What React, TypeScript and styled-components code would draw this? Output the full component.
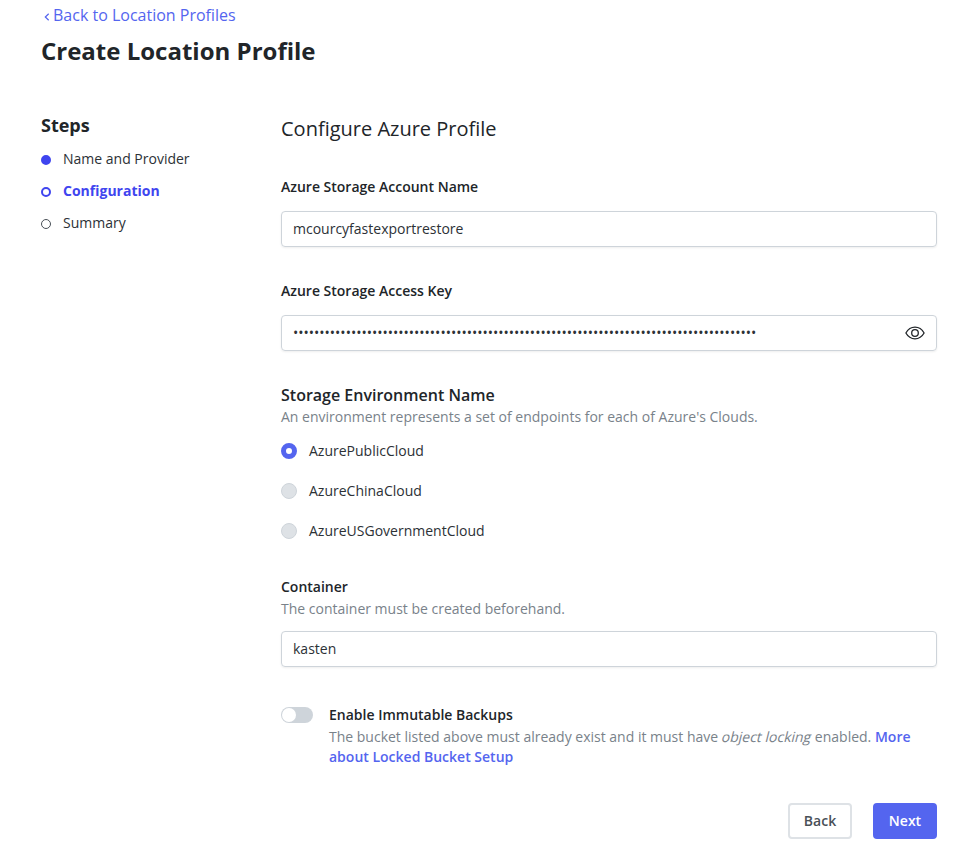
import React, { useState } from "react";
import styled, { createGlobalStyle, css } from "styled-components";

const GlobalStyle = createGlobalStyle`
  *, *::before, *::after { box-sizing: border-box; }
  body {
    margin: 0;
    background: #fff;
    color: #212529;
    font: 400 14px/20px "Open Sans", "Noto Sans", sans-serif;
  }
  h1, h2, h3, p, ol, fieldset { margin: 0; padding: 0; border: 0; }
  ol { list-style: none; }
  input, button { font: inherit; }
`;

const Page = styled.div`
  width: 956px;
  height: 849px;
  padding: 3px 19px 0 41px;
  overflow: hidden;
`;

const BackLink = styled.a`
  display: flex;
  align-items: center;
  gap: 3px;
  width: max-content;
  height: 24px;
  padding-left: 3px;
  color: #5465ef;
  font-size: 16px;
  line-height: 24px;
  text-decoration: none;

  svg { margin-top: 3px; }
`;

const Title = styled.h1`
  margin-top: 8px;
  font-size: 24px;
  line-height: 32px;
  font-weight: 700;
`;

const Columns = styled.div`
  display: grid;
  grid-template-columns: 240px 656px;
  margin-top: 46px;
`;

const StepsTitle = styled.h2`
  font-size: 18px;
  line-height: 24px;
  font-weight: 700;
`;

const StepList = styled.ol`
  display: flex;
  flex-direction: column;
  gap: 12px;
  margin-top: 12px;
`;

type StepState = "done" | "current" | "todo";

const Step = styled.li<{ $state: StepState }>`
  display: flex;
  align-items: center;
  gap: 12px;
  color: #2c3136;
  ${({ $state }) =>
    $state === "current" &&
    css`
      color: #3f45ef;
      font-weight: 700;
    `}
`;

const Marker = styled.span<{ $state: StepState }>`
  width: 10px;
  height: 10px;
  margin-top: 1px;
  border-radius: 50%;
  border: ${({ $state }) => ($state === "todo" ? "1px solid #495057" : "2px solid #3f45ef")};
  background: ${({ $state }) => ($state === "done" ? "#3f45ef" : "#fff")};
`;

const FormTitle = styled.h2`
  padding-top: 2px;
  font-size: 20px;
  line-height: 28px;
  font-weight: 400;
`;

const Field = styled.div<{ $top: number }>`
  margin-top: ${({ $top }) => $top}px;
`;

const Label = styled.label`
  display: block;
  font-weight: 600;
`;

const GroupTitle = styled.h3`
  font-size: 16px;
  line-height: 24px;
  font-weight: 600;
`;

const Hint = styled.p`
  color: #79828a;
`;

const Slanted = styled.em`
  display: inline-block;
  font-style: normal;
  transform: skewX(-14deg);
`;

const InputBox = styled.div<{ $top: number }>`
  display: flex;
  align-items: center;
  height: 36px;
  margin-top: ${({ $top }) => $top}px;
  padding: 0 11px;
  border: 1px solid #ced4da;
  border-radius: 4px;
  box-shadow: 0 1px 2px rgba(33, 37, 41, 0.08);
`;

const Input = styled.input`
  flex: 1;
  min-width: 0;
  height: 20px;
  padding: 0;
  border: 0;
  outline: 0;
  background: none;
  color: #2c3136;
`;

const IconButton = styled.button`
  display: flex;
  padding: 0;
  border: 0;
  background: none;
  color: #212529;
`;

const RadioList = styled.div`
  display: flex;
  flex-direction: column;
  gap: 20px;
  margin-top: 14px;
`;

const RadioRow = styled.label`
  display: flex;
  align-items: center;
  gap: 12px;
  color: #2c3136;
`;

const Radio = styled.input`
  appearance: none;
  width: 16px;
  height: 16px;
  margin: 0;
  border: 1px solid #ced4da;
  border-radius: 50%;
  background: #dee2e6;

  &:checked {
    border: 5px solid #5465ef;
    background: #fff;
  }
`;

const ToggleField = styled.div`
  display: grid;
  grid-template-columns: 32px 1fr;
  column-gap: 16px;
  margin-top: 38px;
`;

const Toggle = styled.button<{ $on: boolean }>`
  display: flex;
  justify-content: ${({ $on }) => ($on ? "flex-end" : "flex-start")};
  width: 32px;
  height: 16px;
  margin-top: 2px;
  padding: 1px;
  border: 0;
  border-radius: 8px;
  background: ${({ $on }) => ($on ? "#5465ef" : "#ced4da")};
`;

const Knob = styled.span`
  width: 14px;
  height: 14px;
  border-radius: 50%;
  background: #fff;
`;

const TextLink = styled.a`
  color: #5465ef;
  font-weight: 600;
  text-decoration: none;
`;

const Actions = styled.div`
  display: flex;
  justify-content: flex-end;
  gap: 21px;
  margin-top: 36px;
`;

const Button = styled.button<{ $primary?: boolean }>`
  width: 64px;
  height: 36px;
  padding: 0;
  border: 2px solid ${({ $primary }) => ($primary ? "#5465ef" : "#dee2e6")};
  border-radius: 4px;
  background: ${({ $primary }) => ($primary ? "#5465ef" : "#fff")};
  color: ${({ $primary }) => ($primary ? "#fff" : "#495057")};
  font-weight: 600;
`;

const steps: { label: string; state: StepState }[] = [
  { label: "Name and Provider", state: "done" },
  { label: "Configuration", state: "current" },
  { label: "Summary", state: "todo" },
];

const clouds = ["AzurePublicCloud", "AzureChinaCloud", "AzureUSGovernmentCloud"];

const ChevronIcon = () => (
  <svg width="6" height="8" viewBox="0 0 6 8" fill="none" stroke="currentColor" strokeWidth="1.2">
    <path d="M4.7 0.7 1.3 4l3.4 3.3" />
  </svg>
);

const EyeIcon = () => (
  <svg width="20" height="14" viewBox="0 0 20 14" fill="none" stroke="currentColor" strokeWidth="1.3">
    <path d="M0.9 7C3 3.3 6.2 1.2 10 1.2S17 3.3 19.1 7C17 10.7 13.8 12.8 10 12.8S3 10.7 0.9 7Z" strokeLinejoin="round" />
    <circle cx="10" cy="7" r="3.3" />
  </svg>
);

export default function App() {
  const [account, setAccount] = useState("mcourcyfastexportrestore");
  const [key, setKey] = useState("•".repeat(88));
  const [cloud, setCloud] = useState(clouds[0]);
  const [container, setContainer] = useState("kasten");
  const [immutable, setImmutable] = useState(false);

  return (
    <Page>
      <GlobalStyle />
      <BackLink href="#">
        <ChevronIcon />
        Back to Location Profiles
      </BackLink>
      <Title>Create Location Profile</Title>
      <Columns>
        <nav>
          <StepsTitle>Steps</StepsTitle>
          <StepList>
            {steps.map((s) => (
              <Step key={s.label} $state={s.state}>
                <Marker $state={s.state} />
                {s.label}
              </Step>
            ))}
          </StepList>
        </nav>
        <main>
          <FormTitle>Configure Azure Profile</FormTitle>
          <Field $top={34}>
            <Label htmlFor="account">Azure Storage Account Name</Label>
            <InputBox $top={14}>
              <Input id="account" value={account} onChange={(e) => setAccount(e.target.value)} />
            </InputBox>
          </Field>
          <Field $top={34}>
            <Label htmlFor="key">Azure Storage Access Key</Label>
            <InputBox $top={14}>
              <Input id="key" value={key} onChange={(e) => setKey(e.target.value)} />
              <IconButton type="button" aria-label="Show key">
                <EyeIcon />
              </IconButton>
            </InputBox>
          </Field>
          <Field $top={32}>
            <GroupTitle>Storage Environment Name</GroupTitle>
            <Hint>An environment represents a set of endpoints for each of Azure's Clouds.</Hint>
            <RadioList>
              {clouds.map((name) => (
                <RadioRow key={name}>
                  <Radio type="radio" name="cloud" checked={cloud === name} onChange={() => setCloud(name)} />
                  {name}
                </RadioRow>
              ))}
            </RadioList>
          </Field>
          <Field $top={36}>
            <Label htmlFor="container">Container</Label>
            <Field $top={2}>
              <Hint>The container must be created beforehand.</Hint>
            </Field>
            <InputBox $top={12}>
              <Input id="container" value={container} onChange={(e) => setContainer(e.target.value)} />
            </InputBox>
          </Field>
          <ToggleField>
            <Toggle type="button" $on={immutable} aria-label="Enable Immutable Backups" onClick={() => setImmutable(!immutable)}>
              <Knob />
            </Toggle>
            <div>
              <Label>Enable Immutable Backups</Label>
              <Field $top={2}>
                <Hint>
                  The bucket listed above must already exist and it must have <Slanted>object locking</Slanted> enabled.{" "}
                  <TextLink href="#">More about Locked Bucket Setup</TextLink>
                </Hint>
              </Field>
            </div>
          </ToggleField>
          <Actions>
            <Button type="button">Back</Button>
            <Button type="button" $primary>
              Next
            </Button>
          </Actions>
        </main>
      </Columns>
    </Page>
  );
}
